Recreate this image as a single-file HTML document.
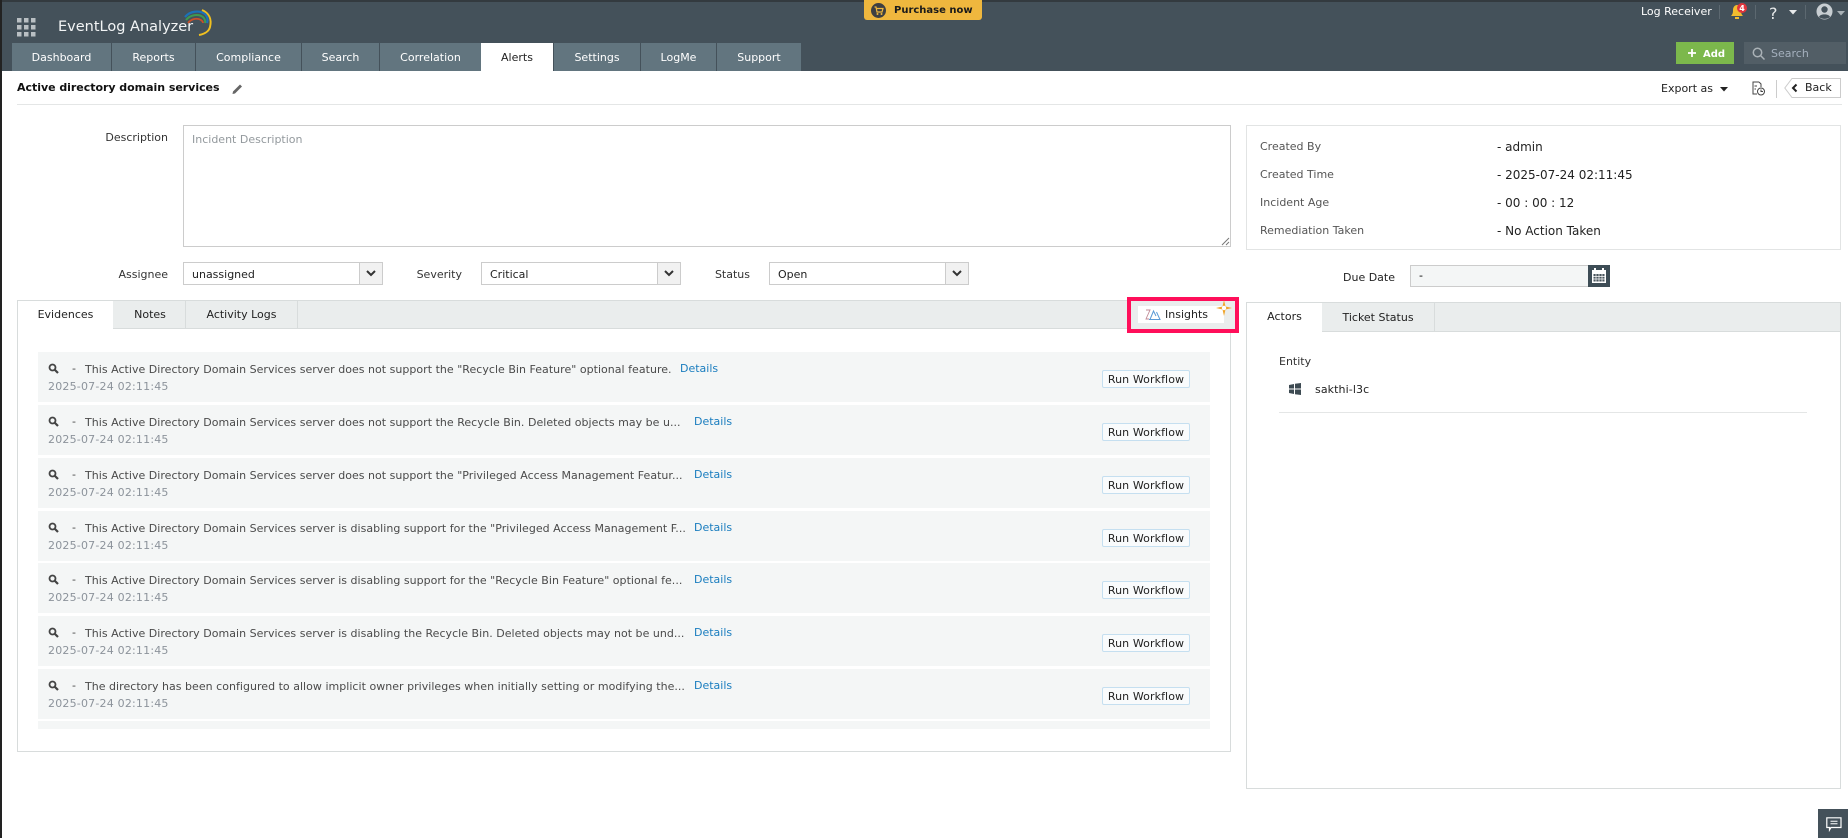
<!DOCTYPE html>
<html><head><meta charset="utf-8"><title>EventLog Analyzer</title>
<style>
html,body{margin:0;padding:0;background:#fff}
body{width:1848px;height:838px;overflow:hidden;position:relative;font:11px/14px "DejaVu Sans",Verdana,sans-serif;color:#222}
div,span,a,svg{position:absolute;white-space:nowrap;box-sizing:border-box}
.t{top:43px;height:28px;background:#62757f;color:#fff;line-height:30px;text-align:center}
.l{color:#333;text-align:right}
.sel{height:23px;border:1px solid #ccc;background:#fff;line-height:23px;padding-left:8px;color:#222}
.sel i{position:absolute;right:0;top:0;width:22px;height:21px;background:#f1f1f1;border-left:1px solid #ccc}
.sel svg{right:6px;top:7px}
.tb{background:#eaeded;border:1px solid #d8dcdc;border-left:0;text-align:center;color:#222;line-height:27px}
.lab{left:1260px;color:#555}
.val{left:1497px;color:#222;font-size:12px}
.row{left:38px;width:1172px;height:50px;background:#f4f6f6}
.row .m{left:10px;top:11px}
.row .d{left:34px;top:10px;color:#444}
.row .x{left:47px;top:11px;color:#4a4a4a;letter-spacing:.025px}
.row .s{left:10px;top:28px;color:#8c939b;letter-spacing:.2px}
.row .a{top:10px;color:#1a7dbf}
.row .b{left:1064px;top:18px;width:88px;height:18px;border:1px solid #c5dff0;border-radius:2px;background:#f9fbfc;text-align:center;line-height:17px;color:#222;letter-spacing:.1px}
</style></head><body>

<div style="left:0;top:0;width:1848px;height:71px;background:#44515a"></div>
<div style="left:0;top:0;width:1848px;height:2px;background:#333a3f"></div>
<div style="left:0;top:0;width:2px;height:838px;background:#222"></div>

<svg style="left:17px;top:18px" width="19" height="19" viewBox="0 0 19 19"><g fill="#b9bfc3"><rect width="4.5" height="4.5"/><rect x="7" width="4.5" height="4.5"/><rect x="14" width="4.5" height="4.5"/><rect y="7" width="4.5" height="4.5"/><rect x="7" y="7" width="4.5" height="4.5"/><rect x="14" y="7" width="4.5" height="4.5"/><rect y="14" width="4.5" height="4.5"/><rect x="7" y="14" width="4.5" height="4.5"/><rect x="14" y="14" width="4.5" height="4.5"/></g></svg>
<div style="left:58px;top:18px;font-size:14.5px;line-height:18px;color:#f2f4f5">EventLog Analyzer</div>
<svg style="left:182px;top:8px" width="32" height="29" viewBox="0 0 32 29" fill="none"><path d="M20 2C27 5 30 11 28 19C27 23 23 26 17 27" stroke="#f0c020" stroke-width="2"/><path d="M3 9C8 3 17 2 23 6C26 9 26 12 25 15" stroke="#1a72b8" stroke-width="2.2"/><path d="M4 12C9 6 17 6 21 9C23 11 23.500 13 23 15" stroke="#3d9a50" stroke-width="2"/><path d="M6 15C10 10 16 10 19 12C20.500 13 21 14 21 15" stroke="#c8502a" stroke-width="1.800"/></svg>

<div class="t" style="left:12px;width:99px">Dashboard</div>
<div class="t" style="left:112px;width:83px">Reports</div>
<div class="t" style="left:196px;width:105px">Compliance</div>
<div class="t" style="left:302px;width:77px">Search</div>
<div class="t" style="left:380px;width:101px">Correlation</div>
<div class="t" style="left:481px;width:72px;background:#fff;color:#222">Alerts</div>
<div class="t" style="left:554px;width:86px">Settings</div>
<div class="t" style="left:641px;width:75px">LogMe</div>
<div class="t" style="left:717px;width:84px">Support</div>

<div style="left:864px;top:0;width:118px;height:20px;background:#efb73e;border-radius:0 0 3px 3px;font-weight:bold;font-size:10px;line-height:21px;color:#1a1a1a;padding-left:30px">Purchase now</div>
<svg style="left:871px;top:3px" width="15" height="15" viewBox="0 0 15 15"><circle cx="7.500" cy="7.500" r="7.500" fill="#3d3f42"/><path d="M3.500 4H5L6 9H11L12 5.500H5.500" fill="none" stroke="#efb73e" stroke-width="1.200"/><circle cx="6.500" cy="11" r="1" fill="#efb73e"/><circle cx="10.500" cy="11" r="1" fill="#efb73e"/></svg>

<div style="left:1641px;top:5px;color:#fff">Log Receiver</div>
<div style="left:1719px;top:5px;width:1px;height:14px;background:#5c6870"></div>
<svg style="left:1730px;top:3px" width="22" height="16" viewBox="0 0 22 16"><path d="M1 13C3 11 3 9 3 7C3 4 5 2 7 2C9 2 11 4 11 7C11 9 11 11 13 13Z" fill="#f2bd2e"/><rect x="5" y="14" width="4" height="2" fill="#f2bd2e"/><circle cx="12" cy="5" r="5" fill="#e0343c"/><text x="12" y="8" font-size="8" font-weight="bold" fill="#fff" text-anchor="middle" font-family="DejaVu Sans">4</text></svg>
<div style="left:1755px;top:5px;width:1px;height:14px;background:#5c6870"></div>
<div style="left:1769px;top:4px;font-size:16px;line-height:20px;color:#e8eaeb">?</div>
<svg style="left:1789px;top:10px" width="8" height="5"><path d="M0 0H8L4 4.500Z" fill="#e8eaeb"/></svg>
<div style="left:1805px;top:5px;width:1px;height:14px;background:#5c6870"></div>
<svg style="left:1816px;top:3px" width="17" height="17" viewBox="0 0 17 17"><circle cx="8.500" cy="8.500" r="8" fill="#c8ced2"/><circle cx="8.500" cy="6.500" r="3.200" fill="#44515a"/><path d="M3 14C4 10.500 13 10.500 14 14C11 16.500 6 16.500 3 14Z" fill="#44515a"/></svg>
<svg style="left:1837px;top:11px" width="8" height="5"><path d="M0 0H8L4 4.500Z" fill="#aab2b7"/></svg>

<div style="left:1676px;top:42px;width:58px;height:22px;background:#7cb84c;color:#fff;font-weight:bold;font-size:10px;line-height:25px;padding-left:27px">Add</div>
<svg style="left:1687px;top:48px" width="10" height="10"><path d="M5 1V9M1 5H9" stroke="#fff" stroke-width="1.800"/></svg>
<div style="left:1744px;top:42px;width:102px;height:22px;background:#525e66;color:#a4b0bd;line-height:24px;padding-left:27px">Search</div>
<svg style="left:1752px;top:47px" width="13" height="13" viewBox="0 0 13 13" fill="none" stroke="#aab2b7" stroke-width="1.500"><circle cx="5.500" cy="5.500" r="4.200"/><path d="M8.500 8.500L12.500 12.500"/></svg>

<div style="left:17px;top:81px;font-weight:bold;color:#111;letter-spacing:-.03px">Active directory domain services</div>
<svg style="left:231px;top:82px" width="13" height="13" viewBox="0 0 13 13"><path d="M2 9.500L9 2.500L11 4.500L4 11.500L1.500 12Z" fill="#666"/></svg>
<div style="left:17px;top:104px;width:1825px;height:1px;background:#e4e6e6"></div>

<div style="left:1661px;top:82px;color:#222">Export as</div>
<svg style="left:1720px;top:87px" width="8" height="5"><path d="M0 0H8L4 4.500Z" fill="#222"/></svg>
<svg style="left:1751px;top:81px" width="14" height="15" viewBox="0 0 14 15" fill="none" stroke="#444" stroke-width="1"><path d="M8 1H2V13H6M8 1L10 3V6"/><path d="M3.500 5H6M3.500 8H5"/><circle cx="10" cy="10.500" r="3.500"/><path d="M10 8.500V10.500H12"/></svg>
<div style="left:1776px;top:80px;width:1px;height:18px;background:#ccc"></div>
<svg style="left:1784px;top:78px" width="57" height="20" viewBox="0 0 57 20"><path d="M8 .5H56.500V19.500H8L.8 10Z" fill="#fff" stroke="#ccc"/><path d="M12.500 6.500L9 10L12.500 13.500" fill="none" stroke="#222" stroke-width="2"/></svg>
<div style="left:1805px;top:81px;color:#222">Back</div>

<div class="l" style="left:90px;width:78px;top:131px">Description</div>
<div style="left:183px;top:125px;width:1048px;height:122px;border:1px solid #ccc;padding:7px 8px;color:#93999d;line-height:14px">Incident Description</div>
<svg style="left:1221px;top:237px" width="9" height="9"><path d="M8 1L1 8M8 5L5 8" stroke="#777"/></svg>

<div class="l" style="left:100px;width:68px;top:268px">Assignee</div>
<div class="sel" style="left:183px;top:262px;width:200px">unassigned<i></i><svg width="10" height="7"><path d="M1 1L5 5L9 1" fill="none" stroke="#333" stroke-width="2"/></svg></div>
<div class="l" style="left:400px;width:62px;top:268px">Severity</div>
<div class="sel" style="left:481px;top:262px;width:200px">Critical<i></i><svg width="10" height="7"><path d="M1 1L5 5L9 1" fill="none" stroke="#333" stroke-width="2"/></svg></div>
<div class="l" style="left:699px;width:51px;top:268px">Status</div>
<div class="sel" style="left:769px;top:262px;width:200px">Open<i></i><svg width="10" height="7"><path d="M1 1L5 5L9 1" fill="none" stroke="#333" stroke-width="2"/></svg></div>

<!-- Evidence panel -->
<div style="left:17px;top:300px;width:1214px;height:452px;border:1px solid #d8dcdc"></div>
<div style="left:17px;top:300px;width:1214px;height:29px;background:#eaeded;border:1px solid #d8dcdc"></div>
<div style="left:18px;top:301px;width:95px;height:29px;background:#fff;text-align:center;line-height:28px;color:#222">Evidences</div>
<div class="tb" style="left:113px;top:300px;width:73px;height:29px;padding-left:2px">Notes</div>
<div class="tb" style="left:186px;top:300px;width:112px;height:29px">Activity Logs</div>

<div style="left:1127px;top:297px;width:112px;height:36px;border:4px solid #ff0f5a;background:#eaeded"></div>
<div style="left:1138px;top:306px;width:86px;height:17px;background:#fff;line-height:18px;padding-left:27px;color:#222">Insights</div>
<svg style="left:1145px;top:308px" width="16" height="13" viewBox="0 0 16 13" fill="none"><path d="M1 2H5L1 11H4" stroke="#c08a95" stroke-width=".9"/><path d="M5 11.500L8.500 3L11 8M4 11.500H15L11.500 4" stroke="#5a9ad6" stroke-width="1"/></svg>
<svg style="left:1216px;top:300px" width="16" height="16" viewBox="0 0 16 16"><path d="M8 0L9.500 6.500L16 8L9.500 9.500L8 16L6.500 9.500L0 8L6.500 6.500Z" fill="#f0a428"/><circle cx="8" cy="8" r="2.200" fill="#fff"/></svg>

<!-- rows -->
<div class="row" style="top:352px"><svg class="m" width="11" height="11" viewBox="0 0 11 11" fill="none" stroke="#444" stroke-width="1.800"><circle cx="4.500" cy="4.500" r="3"/><path d="M7 7L10 10" stroke-width="2.200"/></svg><span class="d">-</span><span class="x">This Active Directory Domain Services server does not support the "Recycle Bin Feature" optional feature.</span><span class="s">2025-07-24 02:11:45</span><a class="a" style="left:642px">Details</a><span class="b">Run Workflow</span></div>
<div class="row" style="top:405px"><svg class="m" width="11" height="11" viewBox="0 0 11 11" fill="none" stroke="#444" stroke-width="1.800"><circle cx="4.500" cy="4.500" r="3"/><path d="M7 7L10 10" stroke-width="2.200"/></svg><span class="d">-</span><span class="x">This Active Directory Domain Services server does not support the Recycle Bin. Deleted objects may be u...</span><span class="s">2025-07-24 02:11:45</span><a class="a" style="left:656px">Details</a><span class="b">Run Workflow</span></div>
<div class="row" style="top:458px"><svg class="m" width="11" height="11" viewBox="0 0 11 11" fill="none" stroke="#444" stroke-width="1.800"><circle cx="4.500" cy="4.500" r="3"/><path d="M7 7L10 10" stroke-width="2.200"/></svg><span class="d">-</span><span class="x">This Active Directory Domain Services server does not support the "Privileged Access Management Featur...</span><span class="s">2025-07-24 02:11:45</span><a class="a" style="left:656px">Details</a><span class="b">Run Workflow</span></div>
<div class="row" style="top:511px"><svg class="m" width="11" height="11" viewBox="0 0 11 11" fill="none" stroke="#444" stroke-width="1.800"><circle cx="4.500" cy="4.500" r="3"/><path d="M7 7L10 10" stroke-width="2.200"/></svg><span class="d">-</span><span class="x">This Active Directory Domain Services server is disabling support for the "Privileged Access Management F...</span><span class="s">2025-07-24 02:11:45</span><a class="a" style="left:656px">Details</a><span class="b">Run Workflow</span></div>
<div class="row" style="top:563px"><svg class="m" width="11" height="11" viewBox="0 0 11 11" fill="none" stroke="#444" stroke-width="1.800"><circle cx="4.500" cy="4.500" r="3"/><path d="M7 7L10 10" stroke-width="2.200"/></svg><span class="d">-</span><span class="x">This Active Directory Domain Services server is disabling support for the "Recycle Bin Feature" optional fe...</span><span class="s">2025-07-24 02:11:45</span><a class="a" style="left:656px">Details</a><span class="b">Run Workflow</span></div>
<div class="row" style="top:616px"><svg class="m" width="11" height="11" viewBox="0 0 11 11" fill="none" stroke="#444" stroke-width="1.800"><circle cx="4.500" cy="4.500" r="3"/><path d="M7 7L10 10" stroke-width="2.200"/></svg><span class="d">-</span><span class="x">This Active Directory Domain Services server is disabling the Recycle Bin. Deleted objects may not be und...</span><span class="s">2025-07-24 02:11:45</span><a class="a" style="left:656px">Details</a><span class="b">Run Workflow</span></div>
<div class="row" style="top:669px"><svg class="m" width="11" height="11" viewBox="0 0 11 11" fill="none" stroke="#444" stroke-width="1.800"><circle cx="4.500" cy="4.500" r="3"/><path d="M7 7L10 10" stroke-width="2.200"/></svg><span class="d">-</span><span class="x">The directory has been configured to allow implicit owner privileges when initially setting or modifying the...</span><span class="s">2025-07-24 02:11:45</span><a class="a" style="left:656px">Details</a><span class="b">Run Workflow</span></div>
<div style="left:38px;top:721px;width:1172px;height:8px;background:#f4f6f6"></div>

<!-- Right info -->
<div style="left:1246px;top:125px;width:595px;height:125px;border:1px solid #e2e4e4"></div>
<div class="lab" style="top:140px">Created By</div><div class="val" style="top:140px">- admin</div>
<div class="lab" style="top:168px">Created Time</div><div class="val" style="top:168px">- 2025-07-24 02:11:45</div>
<div class="lab" style="top:196px">Incident Age</div><div class="val" style="top:196px">- 00 : 00 : 12</div>
<div class="lab" style="top:224px">Remediation Taken</div><div class="val" style="top:224px">- No Action Taken</div>

<div style="left:1343px;top:271px;color:#222">Due Date</div>
<div style="left:1410px;top:265px;width:179px;height:22px;border:1px solid #ccc;background:#f4f6f6;padding-left:8px;line-height:20px;color:#000">-</div>
<div style="left:1588px;top:265px;width:22px;height:22px;background:#3e4d56"></div>
<svg style="left:1591px;top:267px" width="16" height="17" viewBox="0 0 16 17"><path d="M1 3H15V16H1Z" fill="#fff"/><rect x="3" y="1" width="2" height="4" fill="#fff"/><rect x="11" y="1" width="2" height="4" fill="#fff"/><rect x="2.500" y="7" width="11" height="7.500" fill="#4a565e"/><path d="M2.500 9.500H13.500M2.500 12H13.500M5 7V15M8 7V15M11 7V15" stroke="#fff" stroke-width=".7"/></svg>

<!-- Actors -->
<div style="left:1246px;top:302px;width:595px;height:487px;border:1px solid #d8dcdc"></div>
<div style="left:1246px;top:302px;width:595px;height:30px;background:#eaeded;border:1px solid #d8dcdc"></div>
<div style="left:1247px;top:303px;width:75px;height:30px;background:#fff;text-align:center;line-height:28px;color:#222">Actors</div>
<div class="tb" style="left:1322px;top:302px;width:113px;height:30px;line-height:29px">Ticket Status</div>
<div style="left:1279px;top:355px;color:#333">Entity</div>
<svg style="left:1289px;top:383px" width="12" height="12" viewBox="0 0 12 12"><path d="M0 2L5 1V5.500H0ZM6 .8L12 0V5.500H6ZM0 6.500H5V11L0 10ZM6 6.500H12V12L6 11.200Z" fill="#3d4a52"/></svg>
<div style="left:1315px;top:383px;color:#222;letter-spacing:.1px">sakthi-l3c</div>
<div style="left:1279px;top:412px;width:528px;height:1px;background:#e4e6e6"></div>

<div style="left:1818px;top:809px;width:30px;height:29px;background:#44515a"></div>
<svg style="left:1826px;top:817px" width="16" height="15" viewBox="0 0 16 15" fill="none"><path d="M.8.800H15V10.500H5L3.500 13V10.500H.8Z" stroke="#fff" stroke-width="1.200"/><path d="M4.500 4.300H11.500M4.500 6.800H11.500" stroke="#fff"/></svg>

</body></html>
